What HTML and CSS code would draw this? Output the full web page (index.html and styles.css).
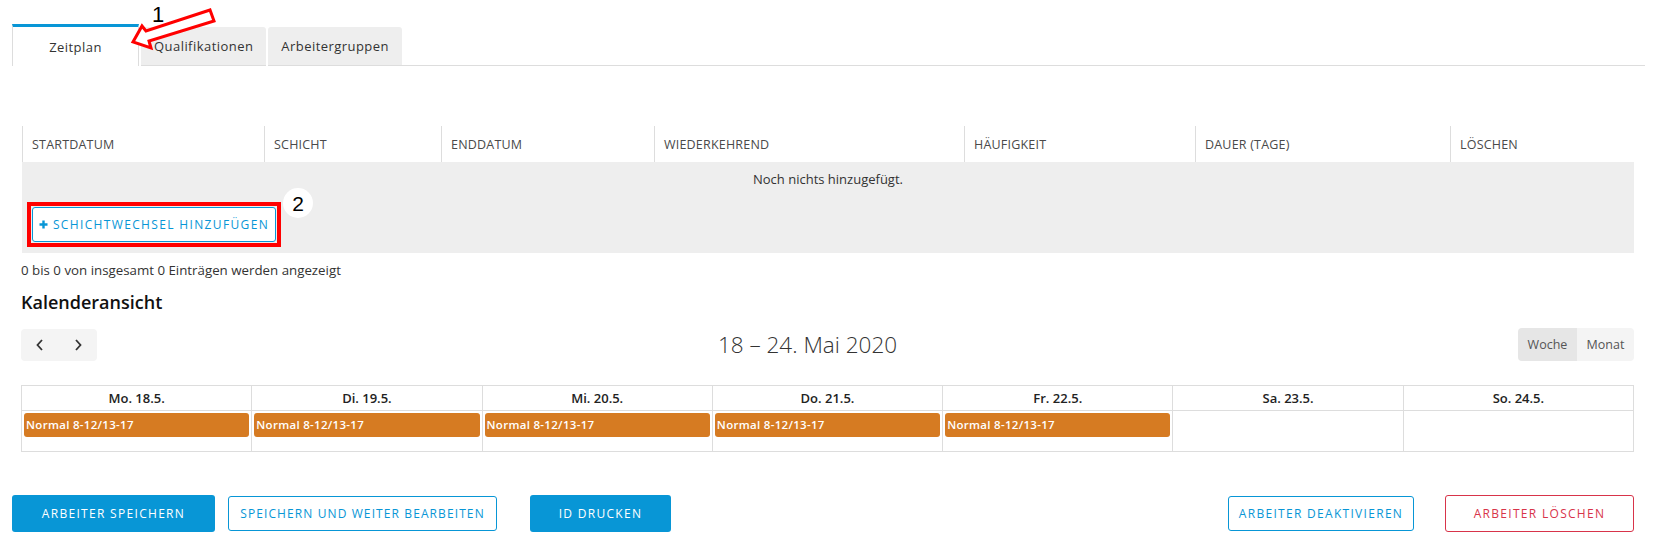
FILE: index.html
```html
<!DOCTYPE html>
<html lang="de">
<head>
<meta charset="utf-8">
<title>Zeitplan</title>
<link rel="stylesheet" href="styles.css">
</head>
<body>
<div class="page">
  <div class="tabs">
    <div class="tab active">Zeitplan</div>
    <div class="tab">Qualifikationen</div>
    <div class="tab">Arbeitergruppen</div>
    <div class="tab-fill"></div>
  </div>

  <svg class="anno-arrow" width="230" height="60" viewBox="0 0 230 60">
    <polygon points="210,10 146,31 142,26 133,42 151,48 149,41 214,21" fill="#fff" stroke="#f00" stroke-width="3" stroke-linejoin="miter"/>
  </svg>
  <span class="anno-num">1</span>

  <div class="content">
    <div class="table">
      <div class="thead">
        <div class="th">Startdatum</div>
        <div class="th">Schicht</div>
        <div class="th">Enddatum</div>
        <div class="th">Wiederkehrend</div>
        <div class="th">Häufigkeit</div>
        <div class="th">Dauer (Tage)</div>
        <div class="th">Löschen</div>
      </div>
      <div class="empty">Noch nichts hinzugefügt.</div>
      <div class="tfoot">
        <div class="hl">
          <button class="btn-add"><svg class="plus" width="9" height="9" viewBox="0 0 9 9"><path d="M4.5 0.5 V8.5 M0.5 4.5 H8.5" stroke="#0896d6" stroke-width="2.4"/></svg>Schichtwechsel hinzufügen</button>
          <span class="badge">2</span>
        </div>
      </div>
    </div>

    <div class="info">0 bis 0 von insgesamt 0 Einträgen werden angezeigt</div>
    <h2 class="cal-title">Kalenderansicht</h2>

    <div class="toolbar">
      <div class="nav">
        <button class="nav-btn" aria-label="zurück">
          <svg width="10" height="14" viewBox="0 0 10 14"><path d="M7 2 L2.5 7 L7 12" fill="none" stroke="#333" stroke-width="1.8"/></svg>
        </button>
        <button class="nav-btn" aria-label="weiter">
          <svg width="10" height="14" viewBox="0 0 10 14"><path d="M3 2 L7.5 7 L3 12" fill="none" stroke="#333" stroke-width="1.8"/></svg>
        </button>
      </div>
      <div class="range">18 – 24. Mai 2020</div>
      <div class="views">
        <button class="view active">Woche</button>
        <button class="view">Monat</button>
      </div>
    </div>

    <div class="cal">
      <div class="ch">Mo. 18.5.</div>
      <div class="ch">Di. 19.5.</div>
      <div class="ch">Mi. 20.5.</div>
      <div class="ch">Do. 21.5.</div>
      <div class="ch">Fr. 22.5.</div>
      <div class="ch">Sa. 23.5.</div>
      <div class="ch">So. 24.5.</div>
      <div class="cd"><div class="event">Normal 8-12/13-17</div></div>
      <div class="cd"><div class="event">Normal 8-12/13-17</div></div>
      <div class="cd"><div class="event">Normal 8-12/13-17</div></div>
      <div class="cd"><div class="event">Normal 8-12/13-17</div></div>
      <div class="cd"><div class="event">Normal 8-12/13-17</div></div>
      <div class="cd"></div>
      <div class="cd"></div>
    </div>
  </div>

  <div class="actions">
    <button class="btn primary w-save">Arbeiter speichern</button>
    <button class="btn outline w-cont">Speichern und weiter bearbeiten</button>
    <button class="btn primary w-id">ID drucken</button>
    <div class="spacer"></div>
    <button class="btn outline w-deact">Arbeiter deaktivieren</button>
    <button class="btn danger w-del">Arbeiter löschen</button>
  </div>
</div>
</body>
</html>
```

FILE: styles.css
```css
* { box-sizing: border-box; }
html, body { margin: 0; padding: 0; background: #fff; }
body {
  font-family: "Open Sans", "Noto Sans", sans-serif;
  color: #333;
  font-size: 12.5px;
}
button { font-family: inherit; cursor: pointer; white-space: nowrap; }

.page {
  position: relative;
  width: 1654px;
  height: 542px;
  padding: 0 20px 0 12px;
  overflow: hidden;
}

/* Tabs */
.tabs {
  display: flex;
  align-items: flex-end;
  margin-top: 24px;
  height: 42px;
  margin-right: -11px;
}
.tab {
  height: 39px;
  padding: 0 13px 0 13px;
  margin-left: 2px;
  background: #eee;
  border-radius: 3px 3px 0 0;
  display: flex;
  align-items: center;
  font-size: 13px;
  letter-spacing: 0.45px;
  color: #333;
  border-bottom: 1px solid #ddd;
}
.tab.active {
  width: 127px;
  height: 42px;
  margin-left: 0;
  justify-content: center;
  background: #fff;
  border-top: 3px solid #0896d6;
  border-left: 1px solid #ddd;
  border-right: 1px solid #ddd;
  border-bottom: none;
  border-radius: 0;
}
.tab-fill {
  flex: 1;
  height: 1px;
  background: #ddd;
}

/* Annotations */
.anno-arrow {
  position: absolute;
  left: 0;
  top: 0;
}
.anno-num {
  position: absolute;
  left: 152px;
  top: 2px;
  font-family: "Liberation Sans", Arial, sans-serif;
  font-size: 22px;
  color: #000;
}

/* Content */
.content { padding-left: 9px; }

.table {
  margin: 60px 0 0 1px;
}
.thead {
  display: grid;
  grid-template-columns: 242px 177px 213px 310px 231px 255px 1fr;
  height: 36px;
}
.th {
  border-left: 1px solid #ddd;
  display: flex;
  align-items: center;
  padding-left: 9px;
  text-transform: uppercase;
  font-size: 12.5px;
  color: #4a4a4a;
  letter-spacing: 0.2px;
}
.empty {
  height: 34px;
  background: #eee;
  display: flex;
  align-items: center;
  justify-content: center;
  color: #333;
  font-size: 13px;
}
.tfoot {
  height: 57px;
  background: #eee;
  padding: 6px 0 0 5px;
}
.hl {
  position: relative;
  display: inline-block;
  border: 4px solid #f00;
  padding: 1px;
  line-height: 0;
}
.btn-add {
  width: 244px;
  height: 35px;
  background: #fff;
  border: 1px solid #0896d6;
  border-radius: 3px;
  color: #0896d6;
  text-transform: uppercase;
  font-size: 12px;
  line-height: 1;
  letter-spacing: 1.35px;
  padding: 0;
  font-weight: 500;
  display: flex;
  align-items: center;
  justify-content: center;
}
.plus { margin-right: 5px; flex: none; }
.badge {
  position: absolute;
  left: 252px;
  top: -18px;
  width: 30px;
  height: 30px;
  border-radius: 50%;
  background: #fff;
  display: flex;
  align-items: center;
  justify-content: center;
  font-family: "Liberation Sans", Arial, sans-serif;
  font-size: 21px;
  line-height: 1;
  color: #000;
}

.info {
  margin-top: 8px;
  line-height: 18px;
  color: #333;
  font-size: 13.3px;
}
.cal-title {
  margin: 11px 0 0;
  font-size: 18px;
  line-height: 24px;
  font-weight: 600;
  color: #111;
}

.toolbar {
  margin-top: 14px;
  display: flex;
  justify-content: space-between;
  align-items: center;
  height: 33px;
}
.nav {
  display: flex;
  width: 76px;
  height: 32px;
  background: #f4f4f4;
  border-radius: 4px;
}
.nav-btn {
  width: 38px;
  height: 32px;
  background: transparent;
  border: 0;
  padding: 0;
  display: flex;
  align-items: center;
  justify-content: center;
}
.range {
  font-size: 22.5px;
  font-weight: 300;
  color: #333;
}
.views {
  display: flex;
  height: 33px;
  border-radius: 4px;
  overflow: hidden;
}
.view {
  border: 0;
  background: #f4f4f4;
  color: #555;
  font-size: 12.5px;
  padding: 0;
  width: 57px;
}
.view.active { background: #e6e6e6; width: 59px; }

.cal {
  margin-top: 24px;
  display: grid;
  grid-template-columns: repeat(7, 1fr);
  grid-template-rows: 25px 41px;
  border-top: 1px solid #ddd;
  border-left: 1px solid #ddd;
}
.ch, .cd {
  border-right: 1px solid #ddd;
  border-bottom: 1px solid #ddd;
}
.ch {
  display: flex;
  align-items: center;
  justify-content: center;
  font-size: 13px;
  font-weight: 600;
  color: #222;
}
.cd { padding: 2px 2px 0 2px; }
.event {
  height: 24px;
  background: #d67b22;
  border-radius: 3px;
  color: #fff;
  font-size: 11.5px;
  font-weight: 600;
  line-height: 24px;
  padding-left: 2px;
  letter-spacing: 0.3px;
}

/* Actions */
.actions {
  margin-top: 43px;
  display: flex;
  align-items: center;
}
.spacer { flex: 1; }
.btn {
  height: 35px;
  border-radius: 3px;
  text-transform: uppercase;
  font-size: 12px;
  letter-spacing: 1.3px;
  padding: 0;
  font-weight: 500;
}
.btn.primary {
  height: 37px;
  background: #0896d6;
  border: 0;
  color: #fff;
}
.btn.outline {
  background: #fff;
  border: 1px solid #0896d6;
  color: #0896d6;
}
.btn.danger {
  height: 37px;
  background: #fff;
  border: 1px solid #d8344a;
  color: #d8344a;
}
.w-save { width: 203px; }
.w-cont { width: 269px; margin-left: 13px; letter-spacing: 1.1px; }
.w-id { width: 141px; margin-left: 33px; }
.w-deact { width: 186px; }
.w-del { width: 189px; margin-left: 31px; }
```
